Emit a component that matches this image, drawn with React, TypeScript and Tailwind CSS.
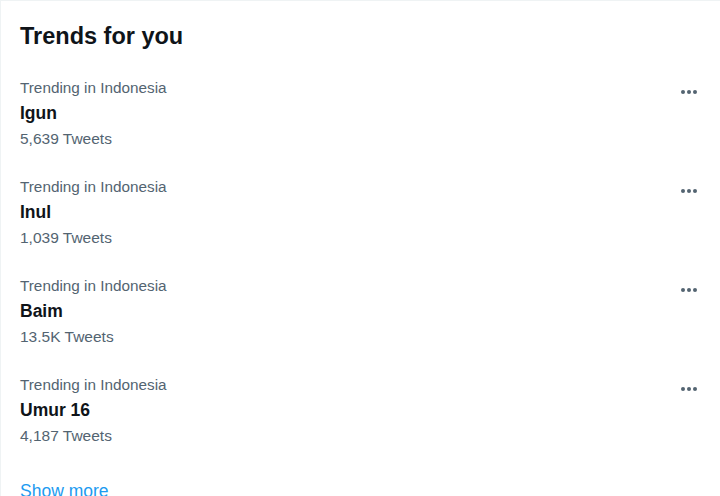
const trends = [
  { place: 'Trending in Indonesia', name: 'Igun', count: '5,639 Tweets' },
  { place: 'Trending in Indonesia', name: 'Inul', count: '1,039 Tweets' },
  { place: 'Trending in Indonesia', name: 'Baim', count: '13.5K Tweets' },
  { place: 'Trending in Indonesia', name: 'Umur 16', count: '4,187 Tweets' },
]

function MoreDots() {
  return (
    <div className="flex items-center gap-[2px]">
      <div className="w-[4px] h-[4px] rounded-full bg-[#536471]" />
      <div className="w-[4px] h-[4px] rounded-full bg-[#536471]" />
      <div className="w-[4px] h-[4px] rounded-full bg-[#536471]" />
    </div>
  )
}

export default function App() {
  return (
    <div
      className="w-[720px] h-[496px] overflow-hidden bg-white border-l border-t border-[#eff3f4]"
      style={{ fontFamily: '"Liberation Sans", Arial, sans-serif' }}
    >
      {/* header */}
      <div className="pl-[19px] pt-[21px] pb-4">
        <h2 className="text-[23.5px] leading-[28px] font-bold text-[#0f1419]">Trends for you</h2>
      </div>

      {/* trends */}
      {trends.map(t => (
        <div key={t.name} className="flex justify-between pl-[19px] pr-[23px] pt-3 pb-4">
          <div>
            <div className="text-[15.3px] leading-[20px] text-[#536471]">{t.place}</div>
            <div className="mt-[3px] text-[17.5px] leading-[24px] font-bold text-[#0f1419]">{t.name}</div>
            <div className="mt-[4px] text-[15.5px] leading-[20px] text-[#536471]">{t.count}</div>
          </div>
          <div className="pt-[12px]">
            <MoreDots />
          </div>
        </div>
      ))}

      {/* footer */}
      <div className="pl-[19px] pt-[17px]">
        <span className="text-[17.5px] leading-[24px] text-[#1d9bf0]">Show more</span>
      </div>
    </div>
  )
}
